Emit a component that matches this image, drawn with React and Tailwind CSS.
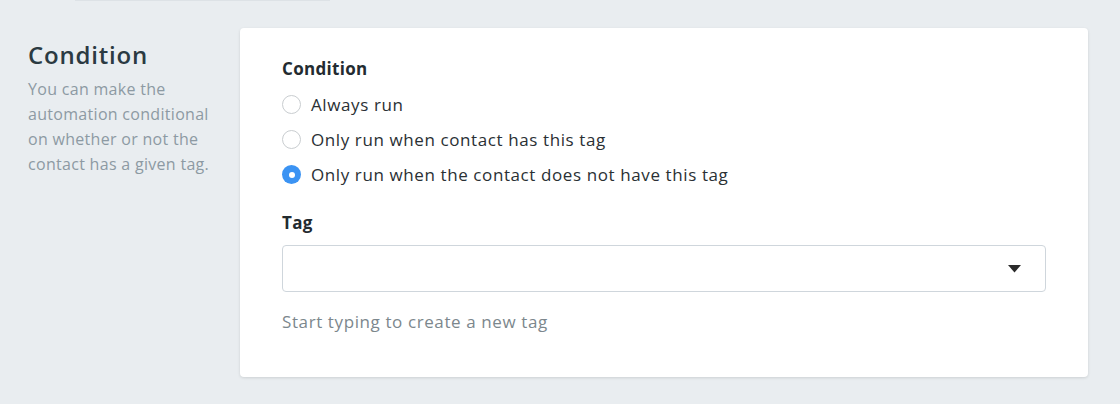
export default function App() {
  const options = [
    { label: "Always run", checked: false },
    { label: "Only run when contact has this tag", checked: false },
    { label: "Only run when the contact does not have this tag", checked: true },
  ];
  return (
    <div
      className="w-[1120px] h-[404px] bg-[#e9edf0] relative overflow-hidden"
      style={{ fontFamily: "'Open Sans', sans-serif" }}
    >
      <div className="absolute top-0 left-[75px] w-[255px] h-px bg-[#dde2e6]" />
      <div className="flex pt-[28px] pl-[28px]">
        <div className="w-[212px] pt-[12px]">
          <h2 className="text-[24px] leading-[30px] font-semibold tracking-[0.8px] text-[#2b3a42]">Condition</h2>
          <p className="mt-[7px] w-[192px] text-[16px] leading-[25px] tracking-[0.3px] text-[#8d9aa3]">
            You can make the automation conditional on whether or not the contact has a given tag.
          </p>
        </div>
        <div className="w-[848px] h-[349px] bg-white rounded-[4px] shadow-[0_1px_3px_rgba(0,0,0,0.12)] pl-[42px] pr-[42px] pt-[30px]">
          <div className="text-[17px] leading-[22px] font-bold tracking-[0.3px] text-[#232b30]">Condition</div>
          <div className="mt-[7px] flex flex-col">
            {options.map((o) => (
              <label key={o.label} className="flex items-center h-[35px]">
                {o.checked ? (
                  <span className="w-[19px] h-[19px] rounded-full bg-[#3b93f3] flex items-center justify-center">
                    <span className="w-[6px] h-[6px] rounded-full bg-white" />
                  </span>
                ) : (
                  <span className="w-[19px] h-[19px] rounded-full border border-[#c9cdd0] bg-white" />
                )}
                <span className="ml-[10px] text-[17px] tracking-[0.6px] text-[#2a3034]">{o.label}</span>
              </label>
            ))}
          </div>
          <div className="mt-[20px] text-[17px] leading-[22px] font-bold tracking-[0.3px] text-[#232b30]">Tag</div>
          <div className="mt-[11px] w-[764px] h-[47px] border border-[#cfd6dc] rounded-[4px] flex items-center justify-end pr-[24px]">
            <svg width="13" height="8" viewBox="0 0 13 8">
              <path d="M0 0 H13 L6.5 7.5 Z" fill="#2b2b2b" />
            </svg>
          </div>
          <div className="mt-[17px] text-[17px] tracking-[0.6px] text-[#7c878d]">Start typing to create a new tag</div>
        </div>
      </div>
    </div>
  );
}
